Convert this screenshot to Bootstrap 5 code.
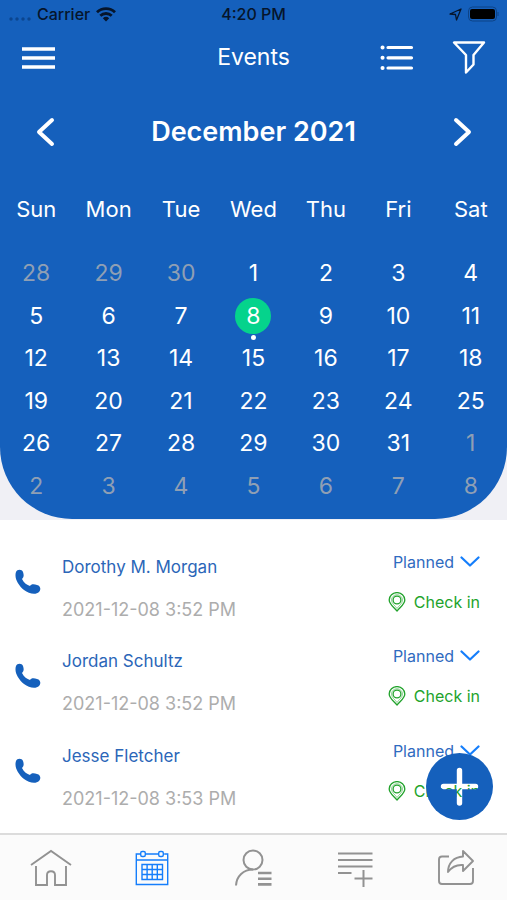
<!DOCTYPE html>
<html lang="en">
<head>
<meta charset="utf-8">
<meta name="viewport" content="width=device-width, initial-scale=1">
<title>Events</title>
<link href="https://cdn.jsdelivr.net/npm/bootstrap@5.3.0/dist/css/bootstrap.min.css" rel="stylesheet">
<style>
  :root { --brand: #1560bc; --sky: #157efb; --leaf: #22a32c; --mute: #adadad; }
  body { font-family: Inter, "Liberation Sans", sans-serif; min-height: 100vh; font-size: 16px; }
  svg { display: block; fill: none; flex-shrink: 0; }
  button { background: none; border: 0; padding: 0; color: inherit; }
  .backdrop { background: #f0f0f5; padding-bottom: 1px; }
  .panel { background: var(--brand); color: #fff; border-radius: 0 0 72px 72px; padding-bottom: 12px; }
  .status { color: #06152b; font-size: 16px; font-weight: 500; height: 28px; padding: 0 8px; }
  .status .side { flex: 1 1 0; gap: 6px; }
  .status .signal { margin-top: 9px; }
  .appbar { height: 58px; padding: 2px 21px 0; }
  .appbar .side { flex: 1 1 0; }
  .appbar h1 { font-size: 23px; font-weight: 400; }
  .actions { gap: 38px; }
  .month { height: 92px; padding: 0 35px; }
  .month h2 { font-size: 27px; font-weight: 600; }
  .days { width: 100%; table-layout: fixed; text-align: center; font-size: 23px; line-height: 36px; }
  .days th { font-size: 22px; font-weight: 400; height: 74px; padding: 0 0 13px; }
  .days td { height: 42px; padding: 0; }
  .days tr:nth-child(even) td { height: 43px; }
  .days button { width: 36px; height: 36px; line-height: 36px; }
  .days .other { color: #8f9fb4; }
  .days .today { background: #05d38c; border-radius: 50%; position: relative; }
  .today::after { content: ""; position: absolute; left: 50%; bottom: -6px; width: 5px; height: 5px; margin-left: -2px; border-radius: 50%; background: #fff; }
  .events { padding-top: 24px; }
  .event { height: 94px; padding: 0 27px 0 15px; }
  .event:nth-child(even) { height: 95px; }
  .event .phone { width: 47px; padding-top: 25px; }
  .event a { color: #2b66b8; font-size: 17px; line-height: 46px; height: 44px; }
  .event time { color: var(--mute); font-size: 18px; line-height: 44px; }
  .event .state { color: #2f6bc0; line-height: 20px; padding-top: 8px; gap: 6px; }
  .event .check { color: var(--leaf); line-height: 20px; margin-top: 20px; gap: 8px; }
  .fab { position: absolute; right: 14px; bottom: 13px; color: var(--brand); border-radius: 50%; }
  .tabs { height: 67px; border-top: 2px solid #dcdcdc; background: #fbfbfb; color: #929292; }
  .tabs a { color: inherit; flex: 1 1 0; }
  .tabs .active { color: var(--sky); }
</style>
<script src="https://cdn.jsdelivr.net/npm/bootstrap@5.3.0/dist/js/bootstrap.bundle.min.js"></script>
</head>
<body class="d-flex flex-column bg-white">
<svg width="0" height="0" class="position-absolute" aria-hidden="true">
  <symbol id="phone" viewBox="0 0 26 26"><path fill="currentColor" d="M1 3C2 0 7 0 8 3c1 3 1 5-1 7 2 4 5 6 8 7 1-2 4-2 7-1 4 1 4 5 2 7-3 3-10 2-15-2C3 16-1 9 1 3Z"/></symbol>
  <symbol id="chev" viewBox="0 0 20 12"><path d="M1.500 1.500 10 9.500l8.500-8" stroke="#157efb" stroke-width="2.200" stroke-linecap="round" stroke-linejoin="round"/></symbol>
  <symbol id="pin" viewBox="0 0 18 20"><g stroke="currentColor" stroke-width="1.300" stroke-linejoin="round"><path d="M9 19C6 15 1.200 12.500 1.200 8a7.800 7.400 0 0 1 15.600 0C16.800 12.500 12 15 9 19Z"/><path d="M9 16.500C7 13.500 3.500 11.500 3.500 8a5.500 5.300 0 0 1 11 0c0 3.500-3.500 5.500-5.500 8.500Z" stroke-width=".5"/><circle cx="9" cy="8" r="3.900"/></g></symbol>
</svg>

<header class="backdrop">
  <div class="panel">
    <div class="status d-flex align-items-center">
      <div class="side d-flex align-items-center">
        <svg class="signal" width="23" height="4" viewBox="0 0 23 4"><g fill="#0b458f"><circle cx="3" cy="2" r="1.700"/><circle cx="9" cy="2" r="1.700"/><circle cx="15" cy="2" r="1.700"/><circle cx="21" cy="2" r="1.700"/></g></svg>
        <span>Carrier</span>
        <svg width="20" height="15" viewBox="0 0 20 15"><g stroke="#06152b" stroke-width="2.800"><path d="M1 5.200a13 13 0 0 1 18 0M4.300 8.800a8.200 8.200 0 0 1 11.400 0"/></g><path fill="#06152b" d="M6.800 11.300a4.800 4.800 0 0 1 6.400 0L10 14.600Z"/></svg>
      </div>
      <span>4:20 PM</span>
      <div class="side d-flex align-items-center justify-content-end">
        <svg width="13" height="13" viewBox="0 0 13 13"><path d="M1 6 12 1 7.500 12 6.500 6.500Z" stroke="#06152b" stroke-width="1.300" stroke-linejoin="round"/></svg>
        <svg width="31" height="16" viewBox="0 0 31 16"><rect x=".5" y="1" width="28" height="14" rx="4" stroke="#0d4387"/><rect x="2" y="3" width="25" height="10" rx="2" fill="#000"/><path d="M30 6v4" stroke="#0d4387"/></svg>
      </div>
    </div>

    <nav class="appbar d-flex align-items-center" aria-label="Main">
      <div class="side d-flex"><button aria-label="Menu"><svg width="34" height="24" viewBox="0 0 34 24"><path d="M1 3h33M1 12h33M1 21h33" stroke="#fff" stroke-width="3.600"/></svg></button></div>
      <h1 class="m-0">Events</h1>
      <div class="side actions d-flex justify-content-end align-items-center">
        <button aria-label="List view"><svg width="34" height="26" viewBox="0 0 34 26"><g stroke="#fff" stroke-width="3.200" stroke-linecap="round"><path d="M8 2.500h23.500M8 12.800h23.500M8 23h23.500"/><path d="M2.500 2.500h.1M2.500 12.800h.1M2.500 23h.1" stroke-width="4"/></g></svg></button>
        <button aria-label="Filter"><svg width="34" height="34" viewBox="0 0 34 34"><path d="M2 1.500h30L21.500 14v9.500L14 31.500V14Z" stroke="#fff" stroke-width="2.400" stroke-linejoin="round"/></svg></button>
      </div>
    </nav>

    <div class="month d-flex align-items-center justify-content-between">
      <button aria-label="Previous month"><svg width="20" height="30" viewBox="0 0 20 30"><path d="M17 3 4 15l13 12" stroke="#fff" stroke-width="4" stroke-linecap="round" stroke-linejoin="round"/></svg></button>
      <h2 class="m-0">December 2021</h2>
      <button aria-label="Next month"><svg width="20" height="30" viewBox="0 0 20 30"><path d="M4 3l13 12L4 27" stroke="#fff" stroke-width="4" stroke-linecap="round" stroke-linejoin="round"/></svg></button>
    </div>

    <table class="days">
      <thead><tr><th scope="col">Sun</th><th scope="col">Mon</th><th scope="col">Tue</th><th scope="col">Wed</th><th scope="col">Thu</th><th scope="col">Fri</th><th scope="col">Sat</th></tr></thead>
      <tbody>
        <tr><td><button class="other">28</button></td><td><button class="other">29</button></td><td><button class="other">30</button></td><td><button>1</button></td><td><button>2</button></td><td><button>3</button></td><td><button>4</button></td></tr>
        <tr><td><button>5</button></td><td><button>6</button></td><td><button>7</button></td><td><button class="today" aria-current="date">8</button></td><td><button>9</button></td><td><button>10</button></td><td><button>11</button></td></tr>
        <tr><td><button>12</button></td><td><button>13</button></td><td><button>14</button></td><td><button>15</button></td><td><button>16</button></td><td><button>17</button></td><td><button>18</button></td></tr>
        <tr><td><button>19</button></td><td><button>20</button></td><td><button>21</button></td><td><button>22</button></td><td><button>23</button></td><td><button>24</button></td><td><button>25</button></td></tr>
        <tr><td><button>26</button></td><td><button>27</button></td><td><button>28</button></td><td><button>29</button></td><td><button>30</button></td><td><button>31</button></td><td><button class="other">1</button></td></tr>
        <tr><td><button class="other">2</button></td><td><button class="other">3</button></td><td><button class="other">4</button></td><td><button class="other">5</button></td><td><button class="other">6</button></td><td><button class="other">7</button></td><td><button class="other">8</button></td></tr>
      </tbody>
    </table>
  </div>
</header>

<main class="flex-grow-1 position-relative">
  <ul class="events list-unstyled m-0">
    <li class="event d-flex">
      <div class="phone"><svg width="26" height="26" color="#1560bc"><use href="#phone"/></svg></div>
      <div class="d-flex flex-column flex-grow-1"><a href="#" class="text-decoration-none">Dorothy M. Morgan</a><time>2021-12-08 3:52 PM</time></div>
      <div class="d-flex flex-column align-items-end">
        <button class="state d-flex align-items-center">Planned<svg width="20" height="12"><use href="#chev"/></svg></button>
        <button class="check d-flex align-items-center"><svg width="18" height="20"><use href="#pin"/></svg>Check in</button>
      </div>
    </li>
    <li class="event d-flex">
      <div class="phone"><svg width="26" height="26" color="#1560bc"><use href="#phone"/></svg></div>
      <div class="d-flex flex-column flex-grow-1"><a href="#" class="text-decoration-none">Jordan Schultz</a><time>2021-12-08 3:52 PM</time></div>
      <div class="d-flex flex-column align-items-end">
        <button class="state d-flex align-items-center">Planned<svg width="20" height="12"><use href="#chev"/></svg></button>
        <button class="check d-flex align-items-center"><svg width="18" height="20"><use href="#pin"/></svg>Check in</button>
      </div>
    </li>
    <li class="event d-flex">
      <div class="phone"><svg width="26" height="26" color="#1560bc"><use href="#phone"/></svg></div>
      <div class="d-flex flex-column flex-grow-1"><a href="#" class="text-decoration-none">Jesse Fletcher</a><time>2021-12-08 3:53 PM</time></div>
      <div class="d-flex flex-column align-items-end">
        <button class="state d-flex align-items-center">Planned<svg width="20" height="12"><use href="#chev"/></svg></button>
        <button class="check d-flex align-items-center"><svg width="18" height="20"><use href="#pin"/></svg>Check in</button>
      </div>
    </li>
  </ul>
  <!-- The plus is cut out of the disc, so the list shows through it. -->
  <button class="fab" aria-label="Add event"><svg width="67" height="67" viewBox="0 0 67 67"><mask id="plus"><rect width="67" height="67" fill="#fff"/><path d="M33.500 17.500v32.500M17.500 33.500h32" stroke="#000" stroke-width="5.400" stroke-linecap="round"/></mask><circle cx="33.500" cy="33.500" r="33.500" fill="currentColor" mask="url(#plus)"/></svg></button>
</main>

<nav class="tabs d-flex align-items-center" aria-label="Sections">
  <a href="#" class="d-flex justify-content-center" aria-label="Home"><svg width="42" height="38" viewBox="0 0 42 38"><path d="M1 16 21 2l20 14M6 17v19h11V26c0-5 8-5 8 0v10h11V17" stroke="currentColor" stroke-width="1.900"/></svg></a>
  <a href="#" class="active d-flex justify-content-center" aria-label="Calendar"><svg width="34" height="38" viewBox="0 0 34 38"><g stroke="currentColor" stroke-width="1.400"><path d="M5.500 5H1.300v30.500h31.400V5h-3.500M10.500 5h13M1.300 11h31.400"/><rect x="5.700" y="2.500" width="4.600" height="5" rx="1.500"/><rect x="23.700" y="2.500" width="4.600" height="5" rx="1.500"/><path d="M7 15.500h20.500v15H7ZM12.100 15.500v15M17.200 15.500v15M22.300 15.500v15M7 20.500h20.500M7 25.500h20.500"/></g></svg></a>
  <a href="#" class="d-flex justify-content-center" aria-label="Contacts"><svg width="38" height="38" viewBox="0 0 38 38"><g stroke="currentColor" stroke-width="2"><circle cx="18" cy="11" r="9.500"/><path d="M1 36.500C1.500 27 8.500 20.500 18 20.500"/><path d="M23 24h13.500M23 29.700h13.500M23 35.400h13.500" stroke-width="2.600"/></g></svg></a>
  <a href="#" class="d-flex justify-content-center" aria-label="Add note"><svg width="36" height="38" viewBox="0 0 36 38"><path d="M1 4.500h34.500M1 11h34.500M1 17.500h34.500M1 24h13.500M17.500 29.500h18M26.500 21v17" stroke="currentColor" stroke-width="2"/></svg></a>
  <a href="#" class="d-flex justify-content-center" aria-label="Share"><svg width="38" height="38" viewBox="0 0 38 38"><g stroke="currentColor" stroke-width="1.900" stroke-linejoin="round"><path d="M12 7.500H5a3 3 0 0 0-3 3V32a3 3 0 0 0 3 3h28a3 3 0 0 0 3-3V19"/><path d="M26 2l10 10-10 10v-6c-6-.5-11 1.500-15 7 0-9 6-15 15-15.500Z"/></g></svg></a>
</nav>
</body>
</html>
